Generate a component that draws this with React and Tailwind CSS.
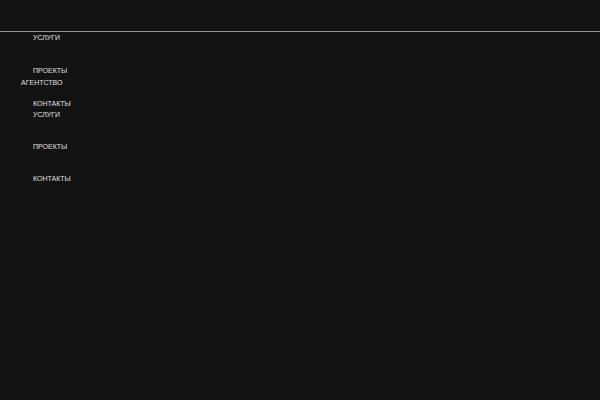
export default function App() {
  return (
    <div className="min-h-screen bg-[#121212] font-['Liberation_Sans',Arial,sans-serif] text-[7px] leading-[8px] text-[#e0e0e0]">
      <header className="h-[32px] border-b border-[#9a9a9a]"></header>

      {/* main nav */}
      <ul className="flex flex-col gap-[25px] pl-[33px] pt-[2px]">
        <li>УСЛУГИ</li>
        <li>ПРОЕКТЫ</li>
        <li>КОНТАКТЫ</li>
      </ul>

      {/* second menu overlapping */}
      <div className="-mt-[29px] pl-[21px]">
        <div>АГЕНТСТВО</div>
        <ul className="mt-[24px] flex flex-col gap-[24px] pl-[12px]">
          <li>УСЛУГИ</li>
          <li>ПРОЕКТЫ</li>
          <li>КОНТАКТЫ</li>
        </ul>
      </div>
    </div>
  );
}
